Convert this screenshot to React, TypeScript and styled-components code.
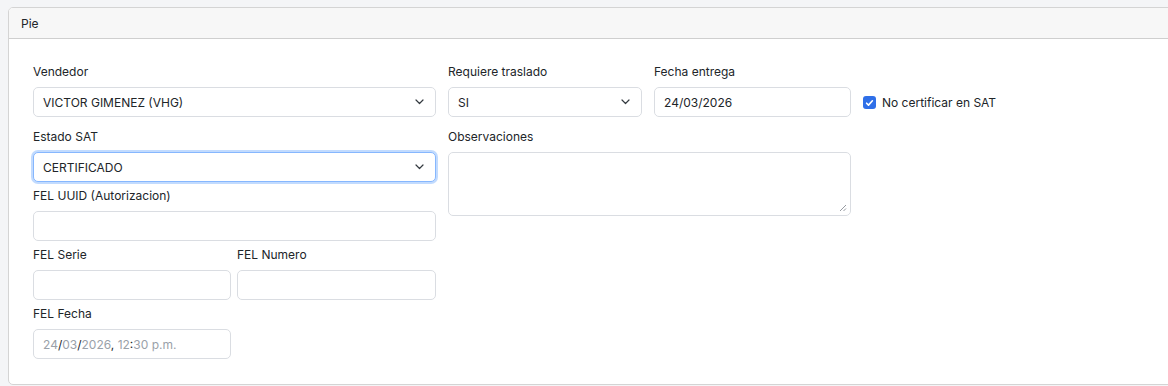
import React from 'react';
import styled, { createGlobalStyle } from 'styled-components';

const GlobalStyle = createGlobalStyle`
  html, body {
    margin: 0;
    padding: 0;
    background: #f4f5f7;
    overflow: hidden;
  }
  body {
    padding: 7px 0 0 8px;
    font-family: Inter, "Liberation Sans", Arial, sans-serif;
    color: #212529;
  }
`;

const Chevron = () => (
  <svg width="9" height="6" viewBox="0 0 9 6" fill="none">
    <path d="M1 1l3.5 3.5L8 1" stroke="#343a40" strokeWidth="1.2" strokeLinecap="round" strokeLinejoin="round" />
  </svg>
);

export default function App() {
  return (
    <>
      <GlobalStyle />
      <Card>
        <CardHeader>Pie</CardHeader>
        <CardBody>
          <LeftCol>
            <Field $gap={11}>
              <Label>Vendedor</Label>
              <Select>
                <span>VICTOR GIMENEZ (VHG)</span>
                <Chevron />
              </Select>
            </Field>
            <Field>
              <Label>Estado SAT</Label>
              <Select $focused>
                <span>CERTIFICADO</span>
                <Chevron />
              </Select>
            </Field>
            <Field>
              <Label>FEL UUID (Autorizacion)</Label>
              <Input />
            </Field>
            <Pair>
              <Field>
                <Label>FEL Serie</Label>
                <Input />
              </Field>
              <Field>
                <Label>FEL Numero</Label>
                <Input />
              </Field>
            </Pair>
            <Field $w={198} $gap={0}>
              <Label>FEL Fecha</Label>
              <Input>
                <span>
                  <Faded>24</Faded>/<Faded>03</Faded>/<Faded>2026</Faded>, <Faded>12</Faded>:<Faded>30 p.m.</Faded>
                </span>
              </Input>
            </Field>
          </LeftCol>
          <RightCol>
            <TopRow>
              <Field $w={194} $gap={11}>
                <Label>Requiere traslado</Label>
                <Select>
                  <span>SI</span>
                  <Chevron />
                </Select>
              </Field>
              <Field $w={197} $gap={11}>
                <Label>Fecha entrega</Label>
                <Input>24/03/2026</Input>
              </Field>
              <CheckWrap>
                <CheckBox>
                  <svg width="9" height="8" viewBox="0 0 9 8" fill="none">
                    <path d="M1.6 4.2l1.9 1.9 3.9-4.3" stroke="#fff" strokeWidth="1.6" strokeLinecap="round" strokeLinejoin="round" />
                  </svg>
                </CheckBox>
                <CheckLabel>No certificar en SAT</CheckLabel>
              </CheckWrap>
            </TopRow>
            <Field $w={403}>
              <Label>Observaciones</Label>
              <TextArea>
                <svg width="8" height="8" viewBox="0 0 8 8">
                  <path d="M7 1L1 7M7 4.5L4.5 7" stroke="#8a8f96" strokeWidth="0.9" />
                </svg>
              </TextArea>
            </Field>
          </RightCol>
        </CardBody>
      </Card>
    </>
  );
}

const Card = styled.div`
  width: 1180px;
  box-sizing: border-box;
  background: #fff;
  border: 1px solid #d4d4d4;
  border-radius: 5px;
  overflow: hidden;
`;

const CardHeader = styled.div`
  height: 31px;
  box-sizing: border-box;
  background: #f7f7f7;
  border-bottom: 1px solid #cfcfcf;
  padding: 0 12px;
  display: flex;
  align-items: center;
  font-size: 12px;
`;

const CardBody = styled.div`
  display: flex;
  gap: 12px;
  padding: 24px 24px 25px;
`;

const LeftCol = styled.div`
  width: 403px;
  display: flex;
  flex-direction: column;
`;

const RightCol = styled.div`
  display: flex;
  flex-direction: column;
`;

const TopRow = styled.div`
  display: flex;
  gap: 12px;
`;

const Pair = styled.div`
  display: grid;
  grid-template-columns: 198px 199px;
  gap: 6px;
`;

const Field = styled.div<{ $w?: number; $gap?: number }>`
  display: flex;
  flex-direction: column;
  width: ${(p) => (p.$w ? `${p.$w}px` : 'auto')};
  margin-bottom: ${(p) => (p.$gap !== undefined ? p.$gap : 5)}px;
`;

const Label = styled.div`
  font-size: 12px;
  line-height: 18px;
  margin-bottom: 6px;
  color: #212529;
`;

const boxBase = `
  box-sizing: border-box;
  height: 30px;
  border: 1px solid #dadde2;
  border-radius: 5px;
  background: #fff;
  font-size: 12px;
  display: flex;
  align-items: center;
  padding: 0 9px;
`;

const Select = styled.div<{ $focused?: boolean }>`
  ${boxBase}
  justify-content: space-between;
  padding-right: 11px;
  ${(p) =>
    p.$focused &&
    `
    border-color: #86b7fe;
    box-shadow: 0 0 0 2px rgba(13, 110, 253, 0.25);
  `}
`;

const Input = styled.div`
  ${boxBase}
`;

const Faded = styled.span`
  color: #9aa1a9;
`;

const TextArea = styled.div`
  box-sizing: border-box;
  height: 64px;
  border: 1px solid #dadde2;
  border-radius: 5px;
  background: #fff;
  display: flex;
  align-items: flex-end;
  justify-content: flex-end;
  padding: 0 3px 3px 0;
`;

const CheckWrap = styled.div`
  display: flex;
  align-items: center;
  gap: 6px;
  margin-top: 31px;
  height: 13px;
  padding-top: 2px;
`;

const CheckBox = styled.div`
  width: 13px;
  height: 13px;
  border-radius: 3px;
  background: #2f6fe8;
  display: flex;
  align-items: center;
  justify-content: center;
`;

const CheckLabel = styled.span`
  font-size: 12px;
`;
